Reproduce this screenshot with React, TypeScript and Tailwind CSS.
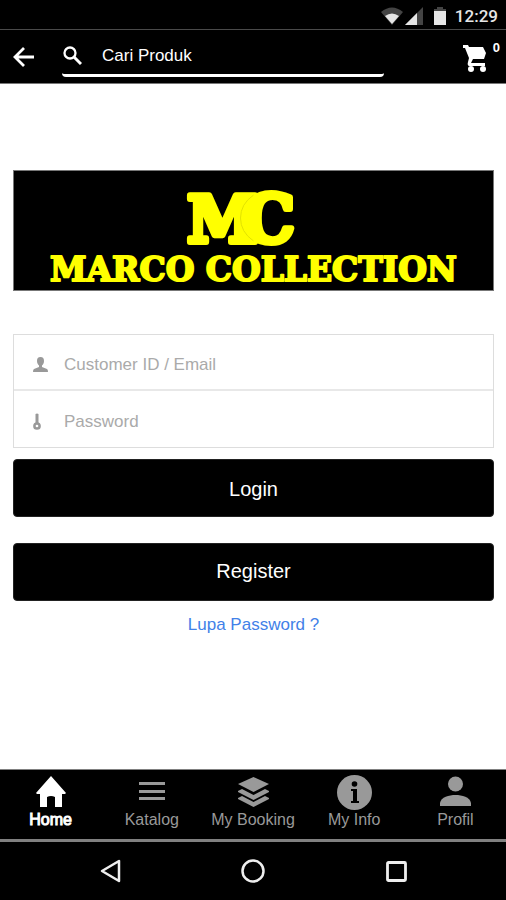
import type { ReactNode } from "react";

function StatusBar() {
  return (
    <div className="flex h-[30px] items-center justify-end border-b border-[#4a4a4a] pr-2 pt-0.5 text-[#e6e6e6]">
      <svg className="h-[18px] w-[22px]" viewBox="0 0 22 18" aria-hidden="true">
        <path d="M0 5Q11-4 22 5L11 18Z" fill="#444" />
        <path d="M4 9Q11 4 18 9L11 17Z" fill="currentColor" />
      </svg>
      <svg className="ml-0.5 h-[18px] w-[18px]" viewBox="0 0 18 18" aria-hidden="true">
        <path d="M0 18L18 0V18Z" fill="#444" />
        <path d="M0 18L12 6V18Z" fill="currentColor" />
      </svg>
      <svg className="ml-2.5 h-[18px] w-[14px]" viewBox="0 0 14 18" aria-hidden="true">
        <path d="M1 2H4V0H10V2H13V5H1Z" fill="#444" />
        <path d="M1 4H13V18H1Z" fill="currentColor" />
      </svg>
      <span className="ml-2 font-[Roboto,sans-serif] text-[17px] font-medium leading-6">12:29</span>
    </div>
  );
}

function Header() {
  return (
    <header className="flex h-[54px] items-center border-b border-[#777] pl-3 pr-1.5 text-white">
      <button type="button" aria-label="Kembali" className="shrink-0">
        <svg className="h-6 w-[23px]" viewBox="0 0 23 24" fill="none" stroke="currentColor" strokeWidth="2.8" aria-hidden="true">
          <path d="M22 12H3M12 3L3 12L12 21" />
        </svg>
      </button>
      <label className="ml-[27px] flex h-10 w-[322px] items-center rounded-b-[4px] border-b-[3px] border-white pt-0.5">
        <svg className="h-5 w-5 shrink-0" viewBox="0 0 20 20" fill="none" stroke="currentColor" aria-hidden="true">
          <circle cx="8" cy="7" r="5.500" strokeWidth="2.300" />
          <path d="M12 11L19 18" strokeWidth="3" />
        </svg>
        <input
          type="search"
          aria-label="Cari Produk"
          placeholder="Cari Produk"
          className="ml-5 min-w-0 flex-1 bg-transparent text-[17px] leading-6 text-white outline-none placeholder:text-white"
        />
      </label>
      <button type="button" aria-label="Keranjang" className="ml-auto flex items-start">
        <svg className="mt-1 h-[27px] w-6" viewBox="0 0 24 27" fill="currentColor" aria-hidden="true">
          <path d="M0 0H5L6 2H20L23 8L21 14H10L8 18H22V21H6Q4 20 5 17L6 13L2 3H0Z" />
          <circle cx="8" cy="24" r="3" />
          <circle cx="20" cy="24" r="3" />
        </svg>
        <span className="ml-1.5 text-[13px] font-bold leading-[14px]">0</span>
      </button>
    </header>
  );
}

function Logo() {
  return (
    <div className="border border-[#777] bg-black">
      <svg
        className="block h-[119px] w-full font-['DejaVu_Serif',serif] font-bold"
        viewBox="0 0 480 119"
        fill="#ffff00"
        stroke="#ffff00"
        strokeLinejoin="round"
        textAnchor="middle"
        role="img"
        aria-label="Marco Collection"
      >
        <text x="209" y="71" fontSize="64" strokeWidth="6">M</text>
        <text x="255" y="71" fontSize="66" strokeWidth="6">C</text>
        <path d="M240 24Q227 33 227 47T240 70" fill="none" stroke="#e2e200" strokeWidth="1" />
        <text x="240" y="110" fontSize="33" strokeWidth="2">MARCO COLLECTION</text>
      </svg>
    </div>
  );
}

function Field({ icon, label, type }: { icon: ReactNode; label: string; type: string }) {
  return (
    <label className="flex h-14 items-center pl-[19px] pt-1">
      <span className="w-[31px] shrink-0 text-[#999]">{icon}</span>
      <input
        type={type}
        aria-label={label}
        placeholder={label}
        className="min-w-0 flex-1 bg-transparent pt-0.5 text-[17px] leading-6 text-[#555] outline-none placeholder:text-[#aaa]"
      />
    </label>
  );
}

function Tab({ icon, label, active = false }: { icon: ReactNode; label: string; active?: boolean }) {
  return (
    <a
      href="#"
      aria-current={active ? "page" : undefined}
      className={"flex flex-1 flex-col items-center pt-1 " + (active ? "text-white" : "text-[#999]")}
    >
      <span className="flex h-9 items-center">{icon}</span>
      <span className={"whitespace-nowrap text-base leading-5 " + (active ? "[-webkit-text-stroke:1px_white]" : "")}>{label}</span>
    </a>
  );
}

function TabBar() {
  return (
    <nav className="flex h-[73px] border-b-[3px] border-t border-[#808080] bg-black">
      <Tab
        active
        label="Home"
        icon={
          <svg className="h-8 w-[30px]" viewBox="0 0 30 32" fill="currentColor" aria-hidden="true">
            <path d="M15 0L30 17L29 18H26V31H19V21Q15 19 11 21V31H4V18H1L0 17Z" />
          </svg>
        }
      />
      <Tab
        label="Katalog"
        icon={
          <svg className="h-5 w-[26px]" viewBox="0 0 26 20" fill="currentColor" aria-hidden="true">
            <path d="M0 0H26V3H0ZM0 8H26V11H0ZM0 15H26V18H0Z" />
          </svg>
        }
      />
      <Tab
        label="My Booking"
        icon={
          <svg className="h-[31px] w-[31px]" viewBox="0 0 31 31" fill="currentColor" aria-hidden="true">
            <path d="M15.500 0L31 7L15.500 15L0 7Z" />
            <path d="M0 14L4 12L15.500 18L27 12L31 14V15L15.500 23L0 15Z" />
            <path d="M0 21L4 19L15.500 25L27 19L31 21V22L15.500 30L0 22Z" />
          </svg>
        }
      />
      <Tab
        label="My Info"
        icon={
          <svg className="h-[35px] w-[35px]" viewBox="0 0 35 35" aria-hidden="true">
            <circle cx="17.500" cy="17.500" r="17.500" fill="currentColor" />
            <circle cx="17.500" cy="9" r="2.800" fill="black" />
            <path d="M14 14H20V26H22V28H14V26H16V16H14Z" fill="black" />
          </svg>
        }
      />
      <Tab
        label="Profil"
        icon={
          <svg className="h-8 w-[31px]" viewBox="0 0 31 32" fill="currentColor" aria-hidden="true">
            <circle cx="15.500" cy="8" r="7.500" />
            <path d="M0 30V27C1 21 9 19 15.500 19S30 21 31 27V30Z" />
          </svg>
        }
      />
    </nav>
  );
}

function SystemBar() {
  return (
    <div className="grid h-[58px] grid-cols-[1fr_142px_142px_1fr] bg-black text-[#eee]">
      <button type="button" aria-label="Back" className="flex items-center justify-end">
        <svg className="-mr-2.5 h-6 w-[21px]" viewBox="0 0 21 24" fill="none" stroke="currentColor" strokeWidth="2.500" strokeLinejoin="round" aria-hidden="true">
          <path d="M2 12L19 2V22Z" />
        </svg>
      </button>
      <button type="button" aria-label="Home screen" className="flex items-center justify-end">
        <svg className="-mr-3 h-6 w-6" viewBox="0 0 24 24" fill="none" stroke="currentColor" strokeWidth="2.500" aria-hidden="true">
          <circle cx="12" cy="12" r="10.500" />
        </svg>
      </button>
      <button type="button" aria-label="Recent apps" className="flex items-center justify-end">
        <svg className="-mr-3 h-[21px] w-[21px]" viewBox="0 0 21 21" fill="none" stroke="currentColor" strokeWidth="2.800" aria-hidden="true">
          <rect x="1.500" y="1.500" width="18" height="18" rx="1" />
        </svg>
      </button>
    </div>
  );
}

export default function App() {
  return (
    <div className="flex min-h-screen flex-col bg-white font-['Liberation_Sans',Arial,sans-serif]">
      <div className="bg-black">
        <StatusBar />
        <Header />
      </div>
      <main className="flex-1 pl-[13px] pr-3 pt-[86px]">
        <Logo />
        <form className="mt-[43px]" onSubmit={(event) => event.preventDefault()}>
          <div className="divide-y-2 divide-[#e8e8e8] border border-[#ddd]">
            <Field
              type="text"
              label="Customer ID / Email"
              icon={
                <svg className="h-[15px] w-[15px]" viewBox="0 0 15 15" fill="currentColor" aria-hidden="true">
                  <path d="M7.500 0C10 0 11 1.500 11 4C11 6 10 7.500 9 8.500V10L14 12Q15 12.500 15 15H0Q0 12.500 1 12L6 10V8.500C5 7.500 4 6 4 4C4 1.500 5 0 7.500 0Z" />
                </svg>
              }
            />
            <Field
              type="password"
              label="Password"
              icon={
                <svg className="h-[17px] w-2" viewBox="0 0 8 17" aria-hidden="true">
                  <path d="M2.500 1Q4 0 5.500 1V11H2.500Z" fill="currentColor" />
                  <circle cx="4" cy="13" r="2.600" fill="none" stroke="currentColor" strokeWidth="2.500" />
                </svg>
              }
            />
          </div>
          <button type="submit" className="mt-[11px] h-[58px] w-full rounded-[4px] border border-[#222] bg-black pt-0.5 text-xl text-white">Login</button>
          <button type="button" className="mt-[26px] h-[58px] w-full rounded-[4px] border border-[#222] bg-black pb-0.5 text-xl text-white">Register</button>
        </form>
        <div className="mt-3 text-center">
          <a href="#" className="text-[17px] leading-6 text-[#4281e8]">Lupa Password ?</a>
        </div>
      </main>
      <TabBar />
      <SystemBar />
    </div>
  );
}
